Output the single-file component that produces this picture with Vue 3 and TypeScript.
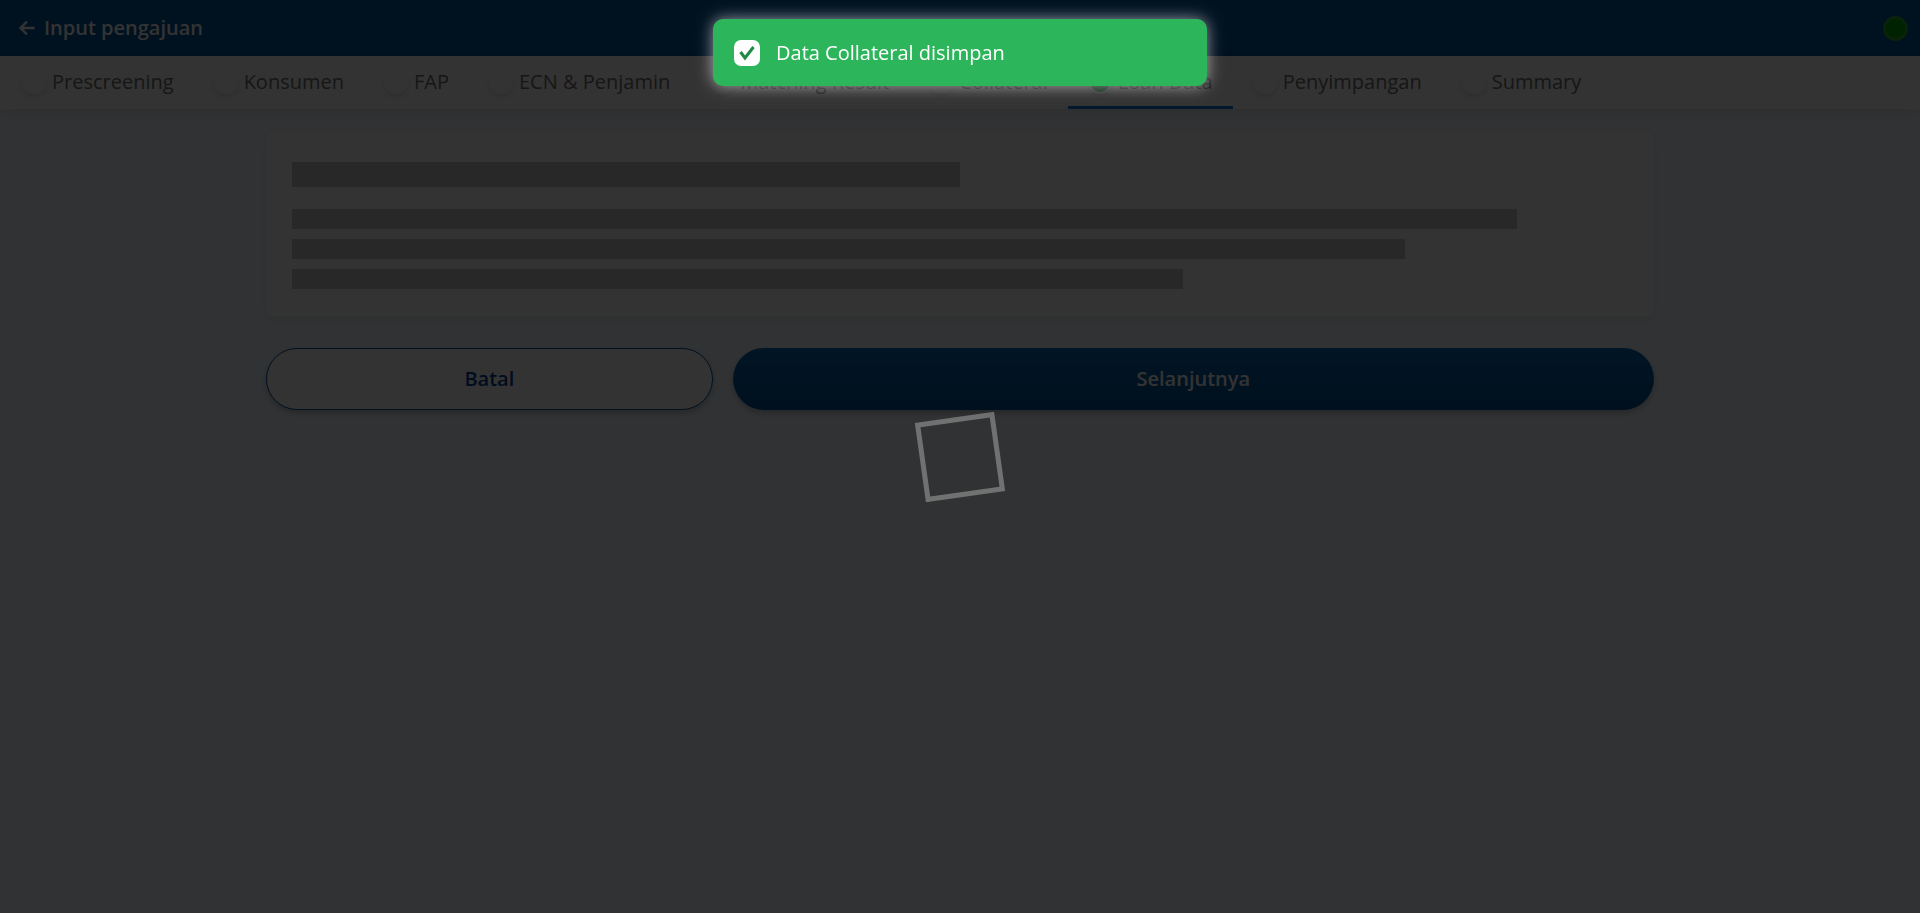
<script setup lang="ts">
interface Step {
  label: string
  active?: boolean
}

const steps: Step[] = [
  { label: 'Prescreening' },
  { label: 'Konsumen' },
  { label: 'FAP' },
  { label: 'ECN & Penjamin' },
  { label: 'Matching Result' },
  { label: 'Collateral' },
  { label: 'Loan Data', active: true },
  { label: 'Penyimpangan' },
  { label: 'Summary' },
]
</script>

<template>
  <div class="page">
    <header class="topbar">
      <button class="back" type="button" aria-label="Kembali">
        <svg width="16" height="16" viewBox="0 0 16 16" fill="none" stroke="currentColor" stroke-width="2.4">
          <path d="M15.5 8H2M8 1.5L1.5 8L8 14.5" />
        </svg>
      </button>
      <h1>Input pengajuan</h1>
      <span class="status"></span>
    </header>

    <nav class="steps">
      <a v-for="step in steps" :key="step.label" href="#" class="step" :class="{ active: step.active }">
        <span class="dot"></span>{{ step.label }}
      </a>
    </nav>

    <main class="content">
      <section class="card" aria-busy="true">
        <div class="bar title"></div>
        <div class="bar long"></div>
        <div class="bar medium"></div>
        <div class="bar short"></div>
      </section>
      <div class="actions">
        <button class="btn cancel" type="button">Batal</button>
        <button class="btn next" type="button">Selanjutnya</button>
      </div>
    </main>

    <div class="overlay"><div class="spinner"></div></div>

    <div class="toast" role="status">
      <svg width="26" height="26" viewBox="0 0 26 26">
        <rect width="26" height="26" rx="7" fill="#fff" />
        <path d="M6.5 12L11 18L19.5 7" fill="none" stroke="#1f8a43" stroke-width="3" />
      </svg>
      <span>Data Collateral disimpan</span>
    </div>
  </div>
</template>

<style>
body {
  margin: 0;
}
</style>

<style scoped>
.page {
  min-height: 100vh;
  background: #f5faff;
  font-family: "Open Sans", "Noto Sans", sans-serif;
  font-size: 20px;
  line-height: 28px;
}
.topbar {
  box-sizing: border-box;
  display: flex;
  align-items: center;
  height: 56px;
  padding: 0 12px 0 19px;
  background: #0055a0;
  color: #fff;
}
.back {
  display: flex;
  padding: 0;
  margin-right: 9px;
  border: 0;
  background: none;
  color: inherit;
}
h1 {
  margin: 0;
  flex: 1;
  font-size: 20px;
  font-weight: 600;
}
.status {
  box-sizing: border-box;
  width: 25px;
  height: 25px;
  border: 3px solid #32aa32;
  border-radius: 50%;
  background: #00aa00;
}
.steps {
  display: flex;
  padding-left: 2px;
  background: #fff;
  box-shadow: 0 3px 16px rgba(0, 0, 0, 0.1);
}
.step {
  display: flex;
  align-items: center;
  gap: 6px;
  padding: 12px 20px 10px;
  border-bottom: 3px solid transparent;
  color: #6e6e6e;
  text-decoration: none;
  white-space: nowrap;
}
.step.active {
  border-bottom-color: #1478dc;
}
.dot {
  box-sizing: border-box;
  width: 24px;
  height: 24px;
  border: 2px solid #fff;
  border-radius: 50%;
  background: #fff;
  box-shadow: 0 3px 6px rgba(0, 0, 0, 0.12);
}
.active .dot {
  background: #2cb55b;
}
.content {
  box-sizing: border-box;
  width: 75%;
  margin: 0 auto;
  padding: 21px 26px;
}
.card {
  padding: 31px 25px 27px;
  border: 1px solid #f0f2f6;
  border-radius: 6px;
  background: #fff;
  box-shadow: 0 3px 12px rgba(0, 0, 0, 0.06);
}
.bar {
  height: 20px;
  margin-top: 10px;
  background: #c8c8c8;
}
.title {
  width: 50%;
  height: 25px;
  margin: 0 0 22px;
}
.title + .bar {
  margin-top: 0;
}
.long {
  width: calc(100% * 11 / 12);
}
.medium {
  width: calc(100% * 10 / 12);
}
.short {
  width: calc(100% * 8 / 12);
}
.actions {
  display: flex;
  gap: 20px;
  margin-top: 31px;
}
.btn {
  box-sizing: border-box;
  height: 62px;
  border: 1px solid #0055a0;
  border-radius: 31px;
  font: 600 20px/28px "Open Sans", "Noto Sans", sans-serif;
  box-shadow: 0 3px 6px rgba(0, 0, 0, 0.24);
}
.cancel {
  width: calc(100% / 3 - 16px);
  background: #fff;
  color: #004096;
}
.next {
  flex: 1;
  border: 0;
  background: linear-gradient(#0a69b4, #005096);
  color: #fff;
}
.overlay {
  position: fixed;
  inset: 0;
  display: flex;
  align-items: center;
  justify-content: center;
  background: rgba(0, 0, 0, 0.8);
}
.spinner {
  box-sizing: border-box;
  width: 80px;
  height: 80px;
  border: 5px solid rgba(255, 255, 255, 0.3);
  transform: rotate(-8deg);
}
.toast {
  position: fixed;
  top: 19px;
  left: 50%;
  box-sizing: border-box;
  display: flex;
  align-items: center;
  gap: 16px;
  width: 494px;
  min-height: 67px;
  padding: 0 21px;
  border-radius: 10px;
  background: #2cb55b;
  color: #fff;
  box-shadow: 0 0 16px rgba(255, 255, 255, 0.6);
  transform: translateX(-50%);
}
</style>
